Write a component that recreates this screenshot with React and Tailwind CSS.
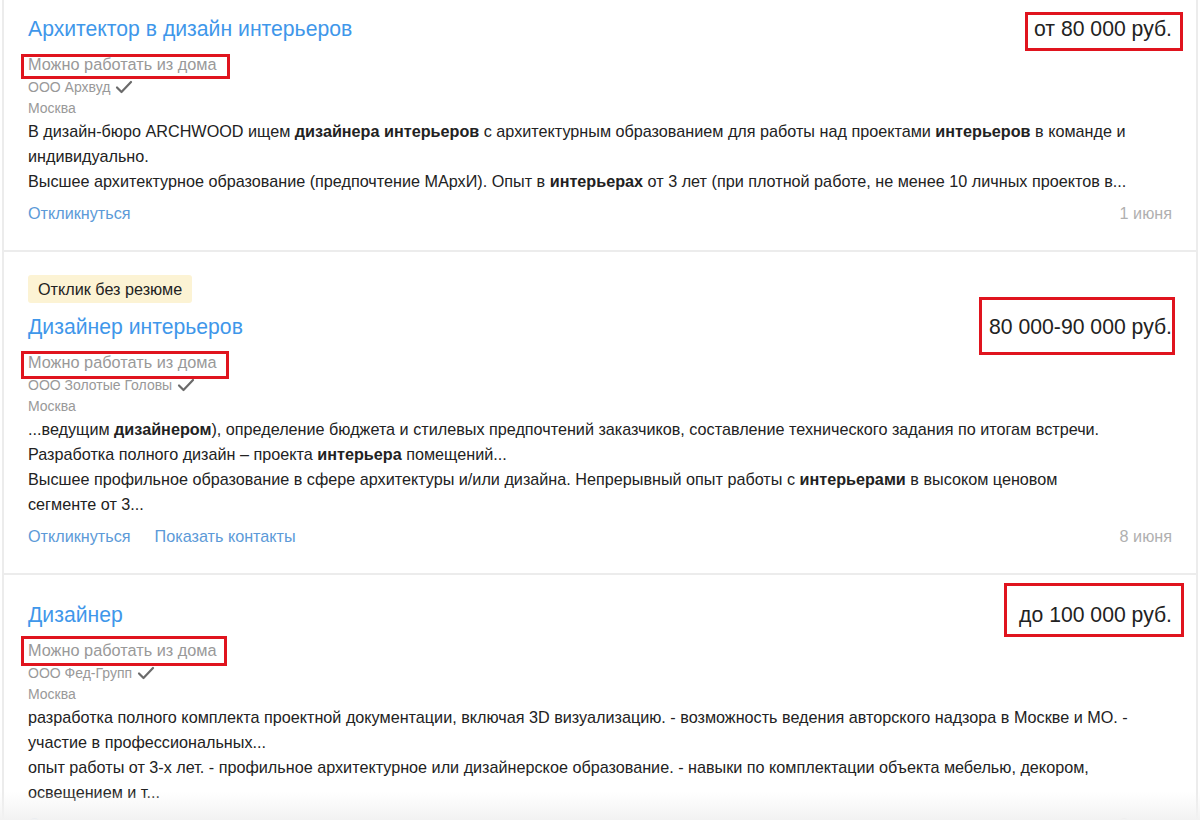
import React from "react";

const Check = () => (
  <svg width="18" height="14" viewBox="0 0 18 14" className="inline-block ml-[5px] -mt-[3px]">
    <path d="M2 7.5 L6.5 12 L16 2" fill="none" stroke="#6b6b6b" strokeWidth="2.2" strokeLinecap="round" strokeLinejoin="round" />
  </svg>
);

const B = ({ children }) => <b className="font-bold">{children}</b>;

const vacancies = [
  {
    title: "Архитектор в дизайн интерьеров",
    salary: "от 80 000 руб.",
    salaryBox: "-top-[2px] -left-[9px] -right-[11px] h-[39px]",
    remoteBox: "-top-[1px] -left-[7px] w-[209px] h-[25px]",
    company: "ООО Архвуд",
    pad: "pt-[14px]",
    desc: [
      <>В дизайн-бюро ARCHWOOD ищем <B>дизайнера интерьеров</B> с архитектурным образованием для работы над проектами <B>интерьеров</B> в команде и<br />индивидуально.</>,
      <>Высшее архитектурное образование (предпочтение МАрхИ). Опыт в <B>интерьерах</B> от 3 лет (при плотной работе, не менее 10 личных проектов в...</>,
    ],
    links: ["Откликнуться"],
    date: "1 июня",
  },
  {
    badge: "Отклик без резюме",
    title: "Дизайнер интерьеров",
    salary: "80 000-90 000 руб.",
    salaryBox: "-top-[15px] -left-[10px] -right-[3px] h-[58px]",
    remoteBox: "-top-[2px] -left-[7px] w-[208px] h-[28px]",
    company: "ООО Золотые Головы",
    pad: "pt-[23px]",
    desc: [
      <>...ведущим <B>дизайнером</B>), определение бюджета и стилевых предпочтений заказчиков, составление технического задания по итогам встречи.</>,
      <>Разработка полного дизайн – проекта <B>интерьера</B> помещений...</>,
      <>Высшее профильное образование в сфере архитектуры и/или дизайна. Непрерывный опыт работы с <B>интерьерами</B> в высоком ценовом<br />сегменте от 3...</>,
    ],
    links: ["Откликнуться", "Показать контакты"],
    date: "8 июня",
  },
  {
    title: "Дизайнер",
    salary: "до 100 000 руб.",
    salaryBox: "-top-[17px] -left-[15px] -right-[12px] h-[54px]",
    remoteBox: "-top-[5px] -left-[7px] w-[206px] h-[30px]",
    company: "ООО Фед-Групп",
    pad: "pt-[25px]",
    desc: [
      <>разработка полного комплекта проектной документации, включая 3D визуализацию. - возможность ведения авторского надзора в Москве и МО. -<br />участие в профессиональных...</>,
      <>опыт работы от 3-х лет. - профильное архитектурное или дизайнерское образование. - навыки по комплектации объекта мебелью, декором,<br />освещением и т...</>,
    ],
    links: ["Откликнуться"],
    date: "8 июня",
  },
];

function Vacancy({ v }) {
  return (
    <div className={`${v.pad} pb-[25px] pl-[24px] pr-[24px] border-b-2 border-[#ececec]`}>
      {v.badge && (
        <div className="inline-block bg-[#fcf3d4] text-[#222] text-[16.2px] leading-[28px] px-[10px] rounded-[3px] mb-[9px]">
          {v.badge}
        </div>
      )}
      <div className="flex justify-between items-start">
        <a className="text-[21.2px] leading-[30px] text-[#3f97ea]">{v.title}</a>
        <span className="relative text-[21.2px] leading-[30px] text-[#222]">
          {v.salary}
          <span className={`absolute ${v.salaryBox} border-[3px] border-[#e0141e]`} />
        </span>
      </div>
      <div className="mt-[8px] text-[16.3px] leading-[24px] text-[#999]">
        <span className="relative">
          Можно работать из дома
          <span className={`absolute ${v.remoteBox} border-[3px] border-[#e0141e]`} />
        </span>
      </div>
      <div className="mt-[1px] text-[14px] leading-[21px] text-[#999]">
        {v.company}
        <Check />
      </div>
      <div className="text-[14px] leading-[21px] text-[#999]">Москва</div>
      <div className="text-[16.2px] leading-[25px] text-[#222]">
        {v.desc.map((d, i) => (
          <p key={i}>{d}</p>
        ))}
      </div>
      <div className="mt-[7px] flex justify-between text-[16.2px] leading-[24px]">
        <div className="flex gap-[24px] text-[#5c9ad8]">
          {v.links.map((l) => (
            <a key={l}>{l}</a>
          ))}
        </div>
        <span className="text-[#b0b0b0]">{v.date}</span>
      </div>
    </div>
  );
}

export default function App() {
  return (
    <div
      className="relative h-[820px] overflow-hidden bg-white px-[2px]"
      style={{ fontFamily: '"Liberation Sans", Arial, sans-serif' }}
    >
      <div className="border-x-2 border-[#ececec] min-h-full">
        {vacancies.map((v) => (
          <Vacancy key={v.title} v={v} />
        ))}
      </div>
      <div className="absolute left-0 right-0 bottom-0 h-[28px] bg-gradient-to-b from-white/0 to-[#f2f2f2]" />
    </div>
  );
}
